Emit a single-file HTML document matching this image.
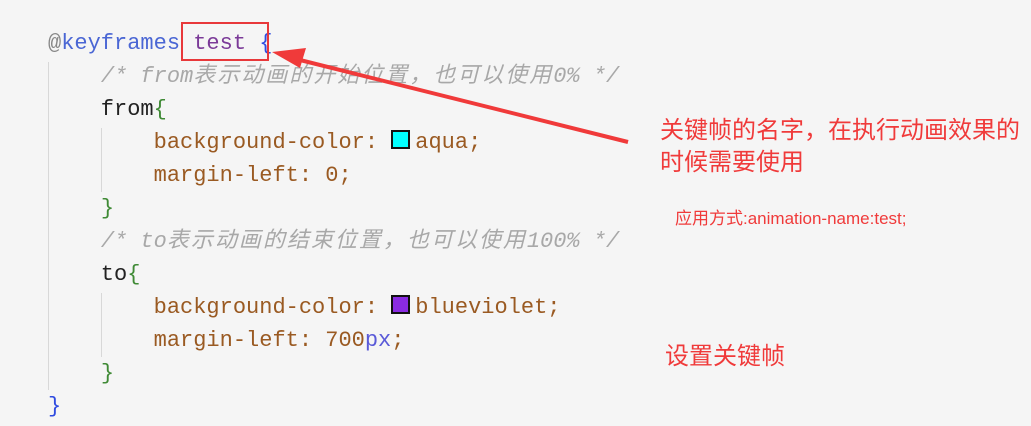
<!DOCTYPE html>
<html><head><meta charset="utf-8"><style>
html,body{margin:0;padding:0;width:1031px;height:426px;background:#f5f5f5;overflow:hidden}
.code{position:absolute;left:48px;top:27px;font-family:"Liberation Mono","Noto Sans CJK SC",monospace;font-size:22px;line-height:33px;color:#222}
.l{height:33px;white-space:pre}
.kw{color:#4a66d4}.at{color:#888}.nm{color:#7b3a98}.br{color:#2f4be0}.cm{color:#a8a8a8;font-style:italic}
.cj{letter-spacing:2px}
.g{color:#3f8a35}.p{color:#9a5a22}.u{color:#5a5ad8}
.sw{display:inline-block;width:15px;height:15px;border:2px solid #111;vertical-align:-1px;margin-right:5px}
.guide{position:absolute;width:1px;background:#d8d8d8}
.red{position:absolute;color:#f03a3a;font-family:"Liberation Sans","Noto Sans CJK SC",sans-serif;white-space:nowrap}
</style></head><body>
<div class="guide" style="left:48px;top:62px;height:328px"></div>
<div class="guide" style="left:101px;top:128px;height:64px"></div>
<div class="guide" style="left:101px;top:293px;height:64px"></div>
<div class="code"><div class="l"><span class="at">@</span><span class="kw">keyframes</span> <span class="nm">test</span> <span class="br">{</span></div><div class="l">    <span class="cm">/* from<span class="cj">表示动画的开始位置，也可以使用</span>0% */</span></div><div class="l">    from<span class="g">{</span></div><div class="l">        <span class="p">background-color: </span><span class="sw" style="background:#00ffff"></span><span class="p">aqua;</span></div><div class="l">        <span class="p">margin-left: 0;</span></div><div class="l">    <span class="g">}</span></div><div class="l">    <span class="cm">/* to<span class="cj">表示动画的结束位置，也可以使用</span>100% */</span></div><div class="l">    to<span class="g">{</span></div><div class="l">        <span class="p">background-color: </span><span class="sw" style="background:#8a2be2"></span><span class="p">blueviolet;</span></div><div class="l">        <span class="p">margin-left: 700</span><span class="u">px</span><span class="p">;</span></div><div class="l">    <span class="g">}</span></div><div class="l"><span class="br">}</span></div></div>
<div style="position:absolute;left:181px;top:22px;width:84px;height:35px;border:2px solid #e8383a"></div>
<svg style="position:absolute;left:0;top:0" width="1031" height="426">
<line x1="300" y1="60" x2="628" y2="142" stroke="#f03a3a" stroke-width="4"/>
<polygon points="272,52 306,48 300,68" fill="#f03a3a"/>
</svg>
<div class="red" style="left:660px;top:115px;font-size:24px;line-height:32px">关键帧的名字，在执行动画效果的<br>时候需要使用</div>
<div class="red" style="left:675px;top:204px;font-size:17px">应用方式:animation-name:test;</div>
<div class="red" style="left:665px;top:336px;font-size:24px">设置关键帧</div>
</body></html>
